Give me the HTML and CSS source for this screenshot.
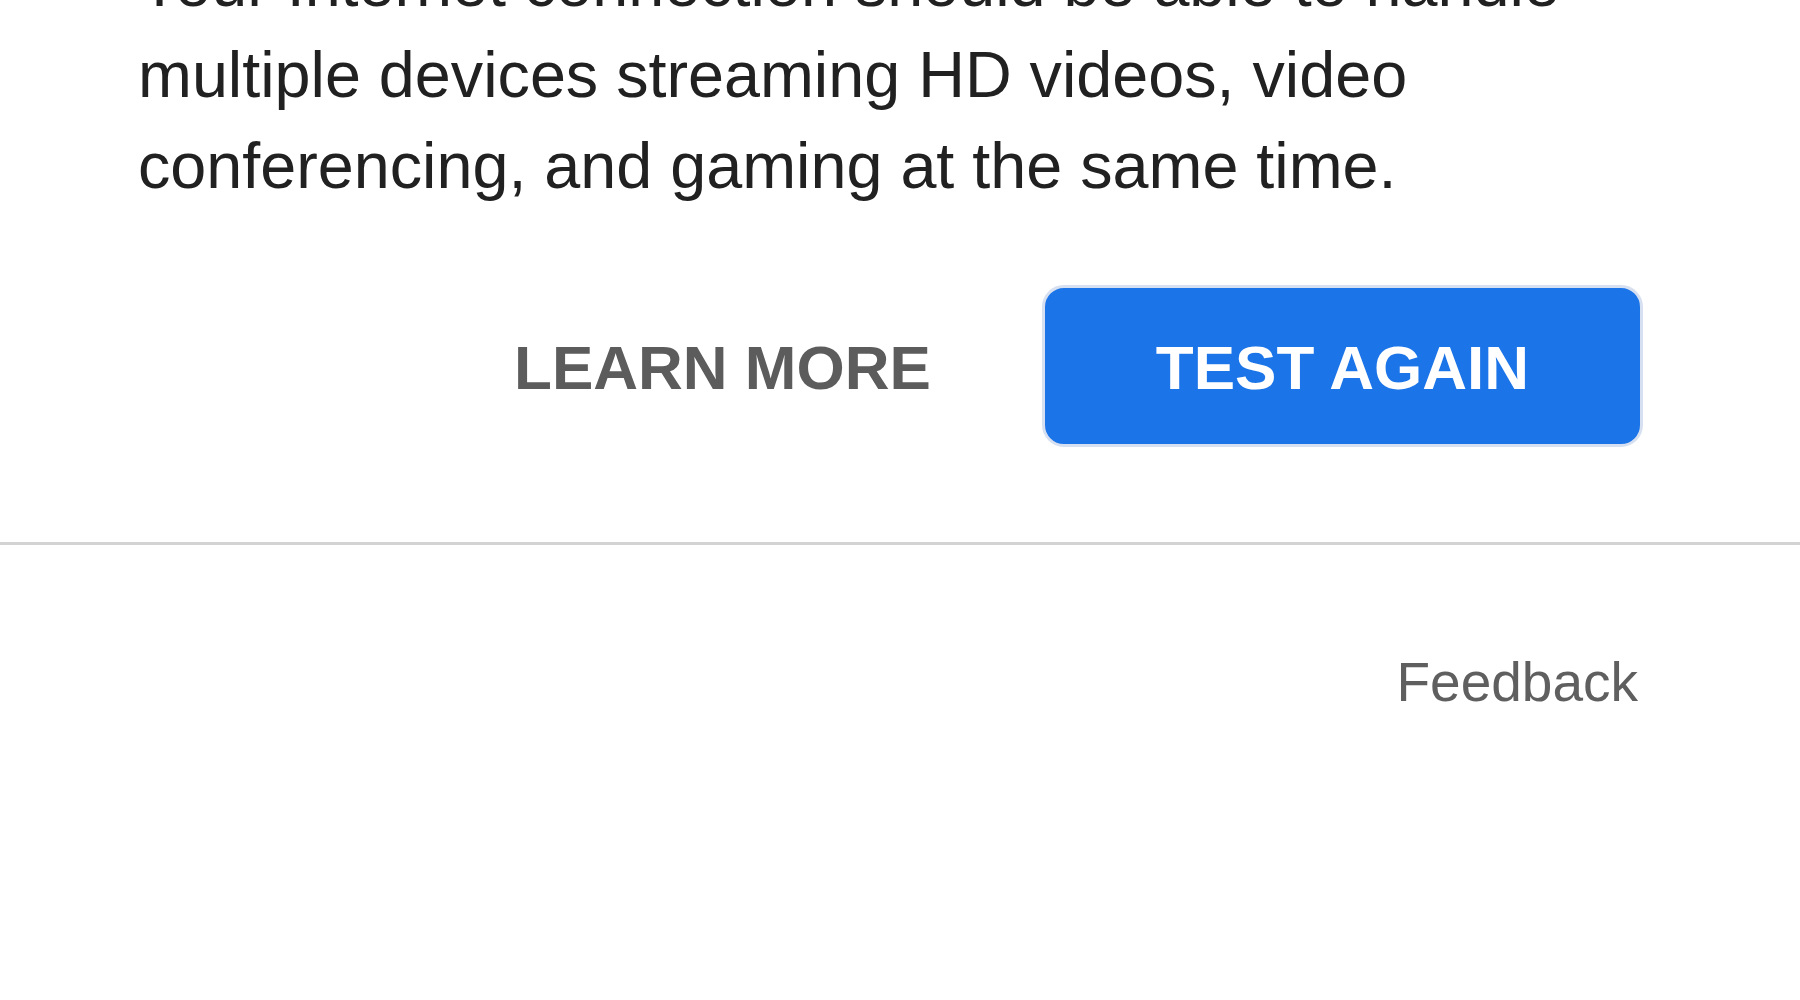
FILE: index.html
```html
<!DOCTYPE html>
<html lang="en">
<head>
<meta charset="utf-8">
<title>Speed test result</title>
<link rel="stylesheet" href="styles.css">
</head>
<body>
<main class="page">
  <section class="result">
    <p class="result-text">Your Internet connection should be able to handle multiple devices streaming HD videos, video conferencing, and gaming at the same time.</p>
    <div class="actions">
      <button class="btn btn-text" type="button">LEARN MORE</button>
      <button class="btn btn-primary" type="button">TEST AGAIN</button>
    </div>
  </section>
  <div class="divider"></div>
  <footer class="footer">
    <a class="feedback" href="#">Feedback</a>
  </footer>
</main>
</body>
</html>
```

FILE: styles.css
```css
html, body {
  margin: 0;
  padding: 0;
  background: #ffffff;
}

body {
  font-family: "Liberation Sans", Arial, Helvetica, sans-serif;
  overflow: hidden;
}

.page {
  display: flex;
  flex-direction: column;
}

.result {
  padding: 0 157px 0 138px;
  display: flex;
  flex-direction: column;
}

.result-text {
  margin: -62px 0 0 0;
  font-size: 64.7px;
  line-height: 91px;
  color: #212121;
}

.actions {
  margin-top: 74px;
  display: flex;
  justify-content: flex-end;
  align-items: center;
  gap: 54px;
}

.btn {
  font-family: "Liberation Sans", Arial, Helvetica, sans-serif;
  font-size: 62px;
  font-weight: 700;
  line-height: 62px;
  border-radius: 22px;
  cursor: pointer;
  margin: 0;
}

.btn-text {
  background: transparent;
  color: #5c5c5c;
  border: 3px solid transparent;
  padding: 49px 54px 45px;
}

.btn-primary {
  background: #1b74e8;
  color: #ffffff;
  border: 3px solid #d6e0f0;
  padding: 49px 111px 45px;
}

.divider {
  margin-top: 95px;
  height: 3px;
  background: #d3d3d3;
}

.footer {
  display: flex;
  justify-content: flex-end;
  padding: 105px 162px 0 0;
}

.feedback {
  font-size: 55px;
  line-height: 64px;
  color: #5f5f5f;
  text-decoration: none;
}
```
